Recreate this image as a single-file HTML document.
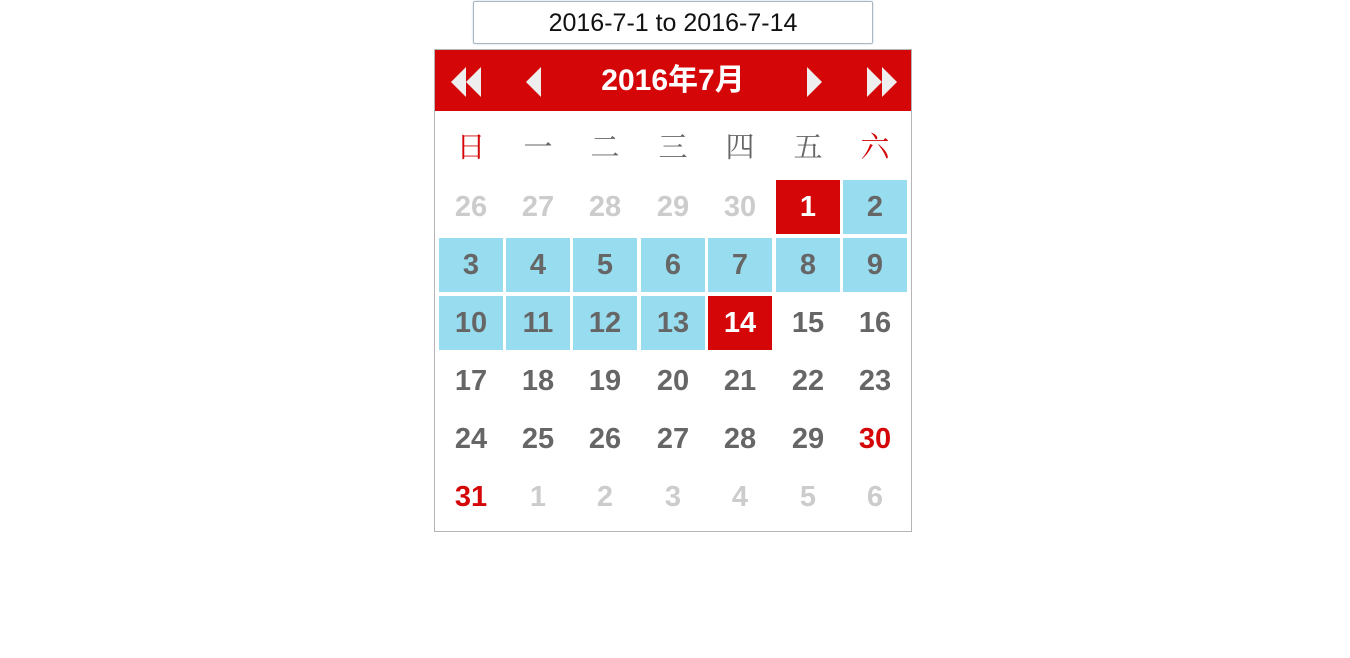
<!DOCTYPE html><html><head><meta charset="utf-8"><style>
body{margin:0;width:1350px;height:658px;background:#fff;position:relative;font-family:"Liberation Sans",Arial,sans-serif;overflow:hidden}
.inp{position:absolute;left:473px;top:1px;width:398px;height:41px;border:1px solid #a9b8c2;border-radius:2px;box-shadow:0 0 2px #c8d4dc;text-align:center;line-height:42px;font-size:25px;color:#111}
.cal{position:absolute;left:434px;top:49px;width:476px;height:481px;border:1px solid #b5b5b5}
.hd{position:absolute;left:0;top:0;width:476px;height:61px;background:#d40608}
.title{position:absolute;left:0;top:0;width:476px;text-align:center;line-height:62px;color:#fff;font-weight:bold;font-size:30px;font-family:"Liberation Sans","Noto Sans CJK SC",sans-serif}
.wk{position:absolute;top:125px;width:64px;text-align:center;font-size:29px;color:#666;font-family:"Noto Serif CJK SC","WenQuanYi Zen Hei",serif}
.c{position:absolute;width:64px;height:54px;line-height:54px;text-align:center;font-weight:bold;font-size:29px;color:#666;font-family:"Liberation Sans",Arial,sans-serif}
.g{color:#ccc}.r{color:#d40608}.b{background:#98dcef}.s{background:#d40608;color:#fff}
</style></head><body>
<div class="inp">2016-7-1 to 2016-7-14</div>
<div class="cal"><div class="hd"><div class="title">2016年7月</div>
<svg width="476" height="61" style="position:absolute;left:0;top:0" fill="#eee">
<polygon points="16,32 31,17 31,47"/><polygon points="31,32 46,17 46,47"/>
<polygon points="91,32 106,17 106,47"/>
<polygon points="372,17 372,47 387,32"/>
<polygon points="432,17 432,47 447,32"/><polygon points="447,17 447,47 462,32"/>
</svg></div></div>
<div id="g"></div>
<script>
var L=[439,506,573,641,708,776,843],T=[180,238,296,354,412,470];
var wk=["日","一","二","三","四","五","六"],h="";
wk.forEach(function(w,i){h+='<div class="wk" style="left:'+L[i]+'px;color:'+(i==0||i==6?'#d40608':'#666')+'">'+w+'</div>'});
var d=[[26,'g'],[27,'g'],[28,'g'],[29,'g'],[30,'g'],[1,'s'],[2,'b']];
for(var i=3;i<=31;i++){var c='';if(i<=13)c='b';if(i==14)c='s';if(i==30||i==31)c='r';d.push([i,c]);}
for(var i=1;i<=6;i++)d.push([i,'g']);
d.forEach(function(x,k){h+='<div class="c '+x[1]+'" style="left:'+L[k%7]+'px;top:'+T[Math.floor(k/7)]+'px">'+x[0]+'</div>'});
document.getElementById('g').innerHTML=h;
</script>
</body></html>
